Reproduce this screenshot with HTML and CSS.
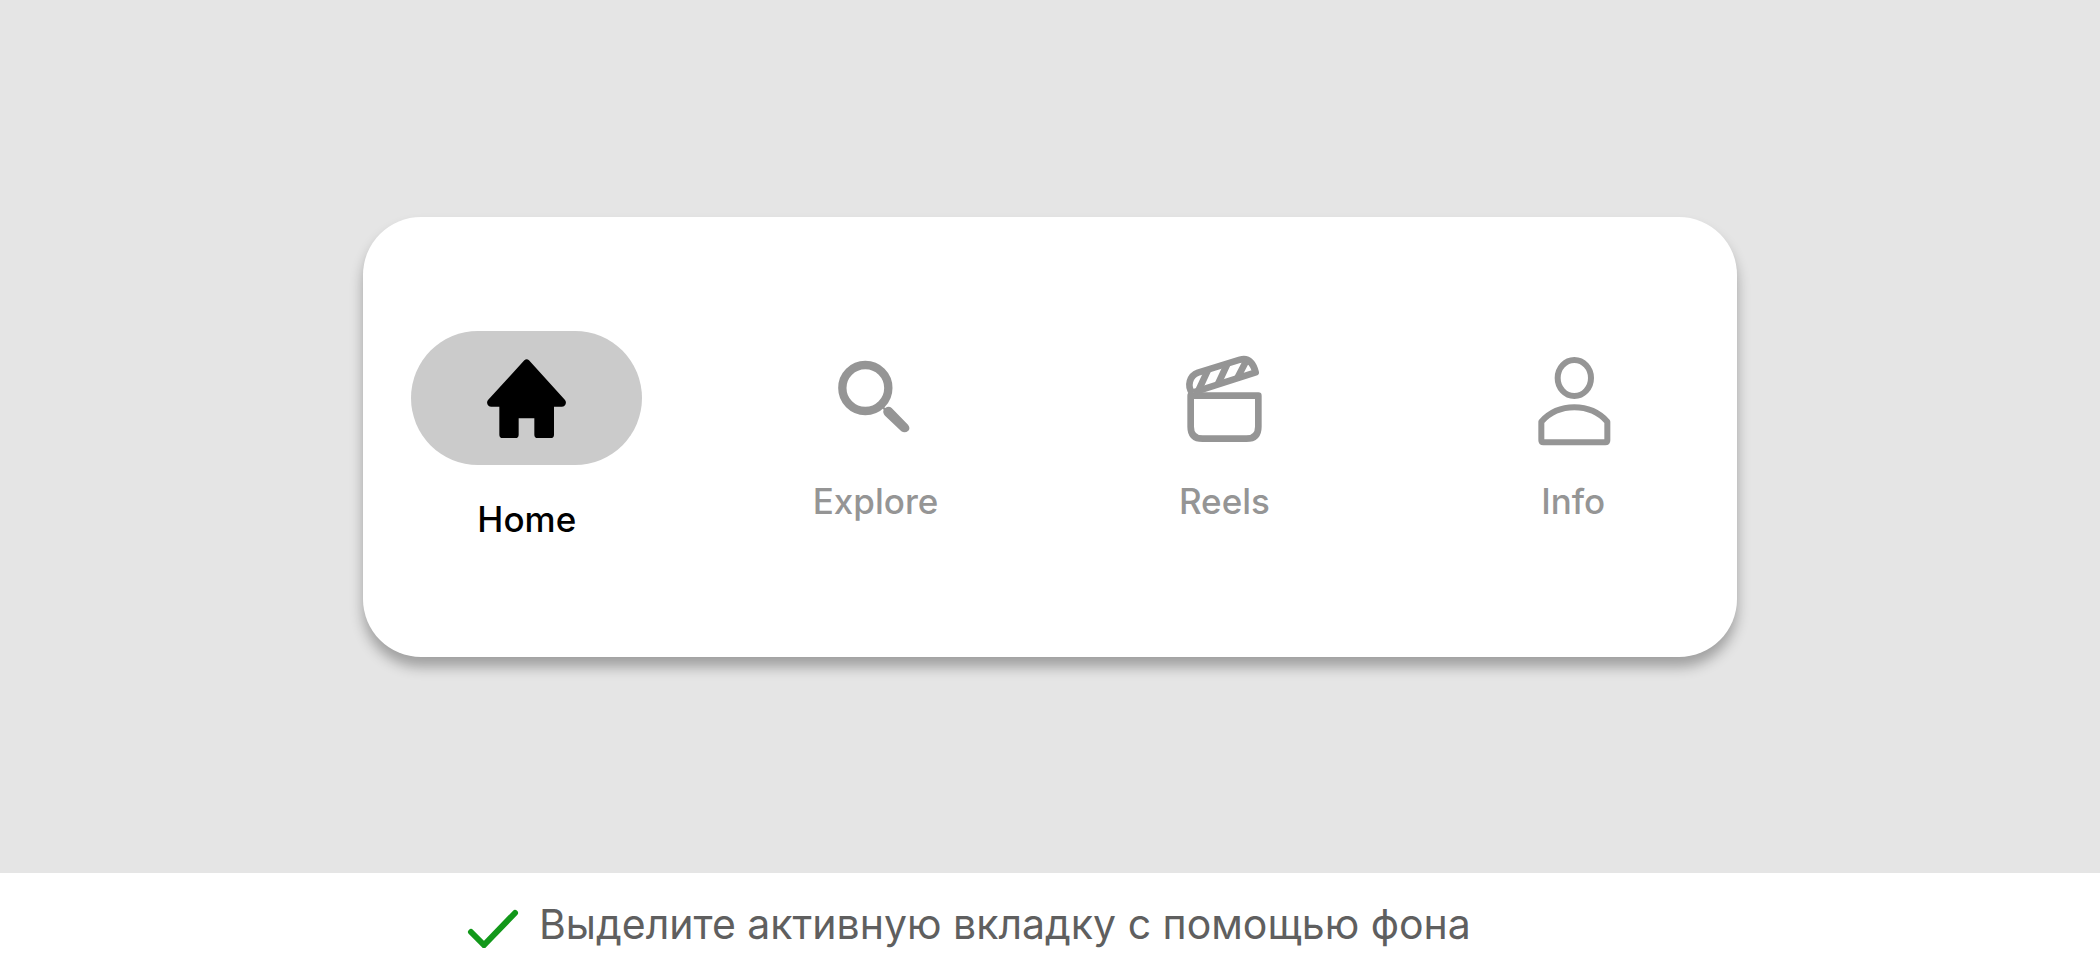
FILE: index.html
```html
<!DOCTYPE html>
<html lang="ru">
<head>
<meta charset="utf-8">
<meta name="viewport" content="width=device-width, initial-scale=1">
<title>Tab bar</title>
<link rel="stylesheet" href="styles.css">
</head>
<body class="page">
<main class="stage">
  <nav class="tabbar" aria-label="Main">
    <a class="tab tab-active" href="#home" aria-current="page">
      <span class="tab-icon">
        <svg class="icon" viewBox="234 87 294 294" aria-hidden="true"><path fill="currentColor" d="M373 121Q380 114 387 121L495 240Q500 247 496 254Q493 260 486 260H462V344Q462 354 452 354H413Q403 354 403 344V295H356V344Q356 354 346 354H308Q298 354 298 344V260H273Q266 260 263 254Q259 247 264 240Z"/></svg>
      </span>
      <span class="tab-label">Home</span>
    </a>
    <a class="tab" href="#explore">
      <span class="tab-icon">
        <svg class="icon" viewBox="81 27 294 294" aria-hidden="true"><circle cx="196" cy="144" r="69" fill="none" stroke="currentColor" stroke-width="25"/><path fill="currentColor" d="M244 196L256 204Q266 196 275 204L324 254Q332 264 325 272Q315 281 304 274L255 227Q247 217 251 209L241 199Z"/></svg>
      </span>
      <span class="tab-label">Explore</span>
    </a>
    <a class="tab" href="#reels">
      <span class="tab-icon">
        <svg class="icon" viewBox="75 27 294 294" aria-hidden="true"><g fill="none" stroke="currentColor" stroke-width="20" stroke-linejoin="round"><path d="M122 167H325V260Q325 296 289 296H158Q122 296 122 260Z"/><path d="M127 160C110 137 119 107 144 98L270 59C297 52 310 71 317 97L130 157"/><path d="M146 150L173 92M204 132L232 72M262 114L289 62"/></g></svg>
      </span>
      <span class="tab-label">Reels</span>
    </a>
    <a class="tab" href="#info">
      <span class="tab-icon">
        <svg class="icon" viewBox="42 27 294 294" aria-hidden="true"><g fill="none" stroke="currentColor" stroke-width="18" stroke-linejoin="round"><ellipse cx="193" cy="114" rx="50" ry="54"/><path d="M94 245Q133 202 193 202T292 245V301Q292 307 286 307H100Q94 307 94 301Z"/></g></svg>
      </span>
      <span class="tab-label">Info</span>
    </a>
  </nav>
</main>
<footer class="caption">
  <svg class="caption-check" viewBox="0 0 52 40" aria-hidden="true"><path d="M4 24L17 37L48 5" fill="none" stroke="currentColor" stroke-width="6" stroke-linecap="round" stroke-linejoin="miter"/></svg>
  <p class="caption-text">Выделите активную вкладку с помощью фона</p>
</footer>
</body>
</html>
```
FILE: styles.css
```css
* {
  box-sizing: border-box;
}

.page {
  display: flex;
  flex-direction: column;
  min-height: 100vh;
  margin: 0;
  background: #fff;
  font-family: Inter, "Liberation Sans", sans-serif;
}

.stage {
  display: flex;
  flex: 1;
  align-items: center;
  justify-content: center;
  background: #e5e5e5;
}

.tabbar {
  display: flex;
  align-items: center;
  justify-content: space-between;
  width: 65.4%;
  padding: 114px 48px;
  border-radius: 58px;
  background: #fff;
  box-shadow: 0 10px 13px rgba(0, 0, 0, 0.3);
}

.tab {
  display: flex;
  flex: 0 1 231px;
  flex-direction: column;
  align-items: center;
  gap: 30px;
  color: #959595;
  text-decoration: none;
}

.tab-icon {
  display: flex;
  justify-content: center;
  width: 100%;
}

.icon {
  display: block;
  width: 98px;
  height: 98px;
}

.tab-label {
  font-size: 35px;
  font-weight: 500;
  line-height: 48px;
}

.tab-active {
  color: #000;
}

.tab-active .tab-icon {
  padding: 18px 0;
  border-radius: 67px;
  background: #cbcbcb;
}

.caption {
  display: flex;
  align-items: center;
  gap: 20px;
  padding: 27px 0 20px 467px;
}

.caption-check {
  width: 52px;
  height: 40px;
  margin-top: 8px;
  color: #12981a;
}

.caption-text {
  margin: 0;
  color: #5f5f5f;
  font-size: 41px;
  line-height: 48px;
}
```
